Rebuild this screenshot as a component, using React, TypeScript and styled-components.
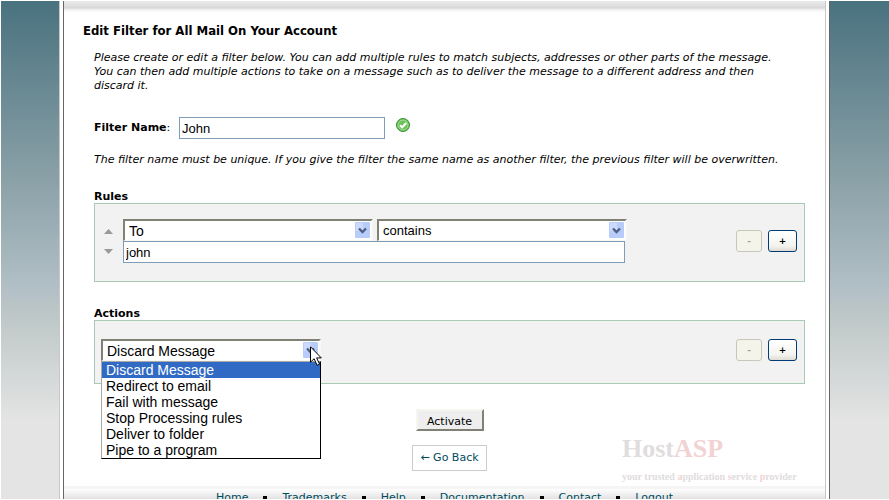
import React, { useState } from "react";
import styled, { createGlobalStyle } from "styled-components";

const GlobalStyle = createGlobalStyle`
  *, *::before, *::after { box-sizing: border-box; }
  body {
    margin: 0;
    overflow: hidden;
    background: #fff;
    color: #000;
    font: 11px/14px Verdana, "DejaVu Sans", sans-serif;
  }
`;

const Page = styled.div`
  display: flex;
  height: 100vh;
  overflow: hidden;
  border: 1px solid #fff;
  border-right: 0;
`;

const Gutter = styled.div`
  flex: 0 0 58px;
  background: linear-gradient(#49727f, #8ba1a8 180px, #b3c0c7 290px, #bcc6c6 310px, #e4e4e4 420px);
`;

const GutterRight = styled(Gutter)`
  flex-basis: 59px;
`;

const Edge = styled.div`
  flex: 0 0 5px;
  background: #fff;
  border-left: 1px solid #c8c8c8;
  border-right: 1px solid #666;
`;

const Main = styled.main`
  position: relative;
  flex: 1;
  min-width: 0;
  height: max-content;
`;

const TopShade = styled.div`
  height: 12px;
  background: linear-gradient(#eaeaea, #d9d9d9 7px, #f4f4f4 9px, #fff);
`;

const Title = styled.h1`
  margin: 8px 0 0 19px;
  font: bold 13px/20px "DejaVu Sans Condensed", "DejaVu Sans", sans-serif;
`;

const Form = styled.form`
  padding: 10px 20px 0 30px;
`;

const Note = styled.p`
  margin: 0;
  font-style: italic;
`;

const Intro = styled(Note)`
  padding-right: 20px;
`;

const NameRow = styled.div`
  display: flex;
  align-items: center;
  margin: 24px 0 14px;

  label { font-weight: bold; width: 85px; }
  label span { font-weight: normal; }
  svg { margin: -6px 0 0 11px; }
`;

const TextInput = styled.input<{ $width?: string }>`
  width: ${(p) => p.$width ?? "100%"};
  height: 22px;
  padding: 0 2px;
  border: 1px solid #7f9db9;
  border-radius: 0;
  background: #fff;
  color: #000;
  font: 13px/20px "Liberation Sans", Arial, sans-serif;
  outline: 0;
`;

const Heading = styled.h2<{ $gap: number }>`
  margin: ${(p) => p.$gap}px 0 0;
  font-size: 11px;
  line-height: 12px;
`;

const Panel = styled.section<{ $pad: string }>`
  display: flex;
  align-items: center;
  padding: ${(p) => p.$pad};
  border: 1px solid #a9cab5;
  background: #f2f2f2;
`;

const Arrows = styled.div`
  display: flex;
  flex-direction: column;
  gap: 15px;
  width: 19px;
  margin-left: 2px;
`;

const ArrowButton = styled.button`
  width: 9px;
  height: 5px;
  padding: 0;
  border: 0;
  background: none;
  svg { display: block; }
`;

const Fields = styled.div`
  flex: 0 1 504px;
`;

const SelectPair = styled.div`
  display: flex;
  gap: 4px;
`;

const SelectBox = styled.div<{ $width?: string }>`
  position: relative;
  flex: 1;
  max-width: ${(p) => p.$width ?? "none"};

  select {
    display: block;
    width: 100%;
    height: 22px;
    padding: 0 20px 0 4px;
    appearance: none;
    border: 2px solid;
    border-color: #808075 #f8f7f3 #f8f7f3 #808075;
    border-bottom-width: 1px;
    border-radius: 0;
    background: #fff;
    color: #000;
    font: 13px/18px "Liberation Sans", Arial, sans-serif;
    outline: 0;
  }
`;

const WideSelectBox = styled(SelectBox)`
  select { font-size: 14px; }
`;

const DropArrow = styled.svg`
  position: absolute;
  top: 3px;
  right: 3px;
  pointer-events: none;
`;

const Options = styled.ul`
  position: absolute;
  top: 22px;
  left: 0;
  z-index: 2;
  width: 100%;
  margin: 0;
  padding: 0;
  border: 1px solid #000;
  border-top-color: #a9a9a5;
  border-left-color: #a9a9a5;
  background: #fff;
  list-style: none;
  font: 14px/16px "Liberation Sans", Arial, sans-serif;
`;

const Option = styled.li<{ $active: boolean }>`
  padding-left: 4px;
  background: ${(p) => (p.$active ? "#316ac5" : "#fff")};
  color: ${(p) => (p.$active ? "#fff" : "#000")};
`;

const Pointer = styled.svg`
  position: absolute;
  top: 7px;
  right: -1px;
  z-index: 3;
  pointer-events: none;
`;

const Tools = styled.div`
  display: flex;
  gap: 6px;
  margin-left: auto;
`;

const ToolButton = styled.button`
  width: 29px;
  height: 22px;
  padding: 0;
  border: 1px solid #003c74;
  border-radius: 3px;
  background: linear-gradient(#fff, #f3f3ef 75%, #dedbd2);
  color: #000;
  font: bold 9px/20px "DejaVu Sans", sans-serif;

  &:disabled {
    width: 26px;
    border-color: #c9c7ba;
    background: #f5f4ea;
    color: #a1a192;
  }
`;

const Submit = styled.div`
  display: flex;
  flex-direction: column;
  align-items: center;
  gap: 14px;
  margin-top: 25px;
`;

const Activate = styled.button`
  width: 68px;
  height: 22px;
  padding: 3px 0 0;
  border: 2px solid;
  border-color: #f6f6f0 #808075 #808075 #f6f6f0;
  background: #eee;
  color: #000;
  font: 11px/14px "DejaVu Sans", sans-serif;
`;

const BackLink = styled.a`
  padding: 5px 7px;
  border: 1px solid #ccc;
  color: #004b5e;
  text-decoration: none;
`;

const Watermark = styled.div`
  position: absolute;
  right: 30px;
  bottom: 21px;
  width: 173px;
  color: #dfdddd;
  font: bold 26px/28px "Liberation Serif", serif;
  pointer-events: none;

  em { color: #f2d3d3; font-style: normal; }
  small {
    display: block;
    margin-top: 7px;
    font-size: 10px;
    line-height: 14px;
    white-space: nowrap;
  }
`;

const Footer = styled.footer`
  margin-top: 15px;
  padding-top: 2px;
  border-top: 3px solid #f5f5f5;
  background: linear-gradient(#fff, #dcdcdc 12px);

  ul {
    display: flex;
    justify-content: center;
    margin: 0;
    padding: 0;
    list-style: none;
  }
  li { display: flex; align-items: center; }
  li + li::before {
    content: "";
    width: 4px;
    height: 4px;
    margin: 0 15px;
    background: #000;
  }
  a { color: #004b5e; text-decoration: none; }
`;

function Chevron() {
  return (
    <DropArrow width="15" height="16" viewBox="0 0 15 16" aria-hidden="true">
      <rect width="15" height="16" rx="1" fill="#b8ccfa" />
      <rect x="1" y="1" width="7" height="8" fill="#cbdafd" />
      <path d="M4 6.5 7.5 10 11 6.5" fill="none" stroke="#4d6185" strokeWidth="2.4" />
    </DropArrow>
  );
}

const actions = [
  "Discard Message",
  "Redirect to email",
  "Fail with message",
  "Stop Processing rules",
  "Deliver to folder",
  "Pipe to a program",
];

const links = ["Home", "Trademarks", "Help", "Documentation", "Contact", "Logout"];

export default function App() {
  const [name, setName] = useState("John");
  const [value, setValue] = useState("john");
  const [action, setAction] = useState(actions[0]);

  return (
    <>
      <GlobalStyle />
      <Page>
        <Gutter />
        <Edge />
        <Main>
          <TopShade />
          <Title>Edit Filter for All Mail On Your Account</Title>
          <Form onSubmit={(e) => e.preventDefault()}>
            <Intro>
              Please create or edit a filter below. You can add multiple rules to match subjects, addresses or
              other parts of the message. You can then add multiple actions to take on a message such as to
              deliver the message to a different address and then discard it.
            </Intro>
            <NameRow>
              <label htmlFor="name">
                Filter Name<span>:</span>
              </label>
              <TextInput id="name" $width="206px" value={name} onChange={(e) => setName(e.target.value)} />
              <svg width="14" height="14" viewBox="0 0 14 14" role="img" aria-label="Valid">
                <circle cx="7" cy="7" r="6.5" fill="#62bb50" stroke="#3d8f35" />
                <circle cx="7" cy="7" r="5" fill="#6cc35b" stroke="#a5dc98" />
                <path d="M4 7.2 6.2 9.3 10.3 5" fill="none" stroke="#fff" strokeWidth="2" />
              </svg>
            </NameRow>
            <Note>
              The filter name must be unique. If you give the filter the same name as another filter, the
              previous filter will be overwritten.
            </Note>

            <Heading $gap={24}>Rules</Heading>
            <Panel $pad="15px 7px 18px" aria-label="Rules">
              <Arrows>
                <ArrowButton type="button" aria-label="Move up">
                  <svg width="9" height="5" viewBox="0 0 9 5"><path d="M0 5 4.5 0 9 5z" fill="#999" /></svg>
                </ArrowButton>
                <ArrowButton type="button" aria-label="Move down">
                  <svg width="9" height="5" viewBox="0 0 9 5"><path d="M0 0h9L4.5 5z" fill="#999" /></svg>
                </ArrowButton>
              </Arrows>
              <Fields>
                <SelectPair>
                  <WideSelectBox>
                    <select aria-label="Message part"><option>To</option><option>From</option></select>
                    <Chevron />
                  </WideSelectBox>
                  <SelectBox>
                    <select aria-label="Comparison"><option>contains</option><option>equals</option></select>
                    <Chevron />
                  </SelectBox>
                </SelectPair>
                <TextInput
                  aria-label="Value"
                  $width="calc(100% - 2px)"
                  value={value}
                  onChange={(e) => setValue(e.target.value)}
                />
              </Fields>
              <Tools>
                <ToolButton type="button" disabled aria-label="Remove rule">-</ToolButton>
                <ToolButton type="button" aria-label="Add rule">+</ToolButton>
              </Tools>
            </Panel>

            <Heading $gap={26}>Actions</Heading>
            <Panel $pad="18px 7px 22px 6px" aria-label="Actions">
              <WideSelectBox $width="220px">
                <select aria-label="Action" value={action} onChange={(e) => setAction(e.target.value)}>
                  {actions.map((a) => <option key={a}>{a}</option>)}
                </select>
                <Chevron />
                <Options role="listbox" aria-label="Action choices">
                  {actions.map((a) => (
                    <Option key={a} role="option" aria-selected={a === action} $active={a === action} onClick={() => setAction(a)}>
                      {a}
                    </Option>
                  ))}
                </Options>
                <Pointer width="12" height="21" viewBox="0 0 12 21" aria-hidden="true">
                  <path d="M.5.8v15.4l3.6-3.5 3 6.6 2.5-1.1-3-6.3h4.7z" fill="#fff" stroke="#000" />
                </Pointer>
              </WideSelectBox>
              <Tools>
                <ToolButton type="button" disabled aria-label="Remove action">-</ToolButton>
                <ToolButton type="button" aria-label="Add action">+</ToolButton>
              </Tools>
            </Panel>

            <Submit>
              <Activate type="submit">Activate</Activate>
              <BackLink href="#back">← Go Back</BackLink>
            </Submit>
          </Form>
          <Footer>
            <ul>
              {links.map((l) => <li key={l}><a href={"#" + l.toLowerCase()}>{l}</a></li>)}
            </ul>
          </Footer>
          <Watermark>
            Host<em>ASP</em>
            <small>
              your trusted <em>a</em>pplication <em>s</em>ervice <em>p</em>rovider
            </small>
          </Watermark>
        </Main>
        <Edge />
        <GutterRight />
      </Page>
    </>
  );
}
